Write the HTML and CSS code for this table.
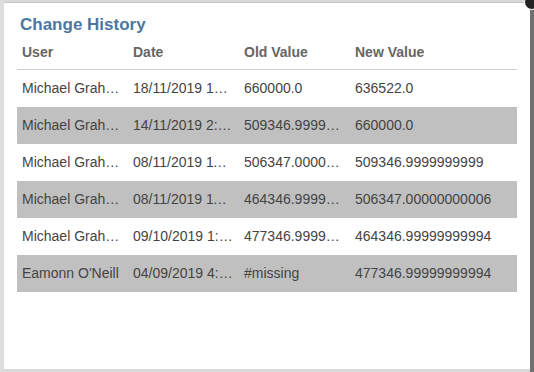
FILE: index.html
```html
<!DOCTYPE html>
<html>
<head>
<meta charset="utf-8">
<link rel="stylesheet" href="styles.css">
</head>
<body>
<div class="page">
  <div class="backdrop-left"></div>
  <div class="modal">
    <h2 class="title">Change History</h2>
    <table class="history">
      <colgroup>
        <col class="c-user"><col class="c-date"><col class="c-old"><col class="c-new">
      </colgroup>
      <thead>
        <tr><th>User</th><th>Date</th><th>Old Value</th><th>New Value</th></tr>
      </thead>
      <tbody>
        <tr><td>Michael Graham</td><td>18/11/2019 10:42:13</td><td>660000.0</td><td>636522.0</td></tr>
        <tr class="alt"><td>Michael Graham</td><td>14/11/2019 2:15:07 PM</td><td>509346.9999999999</td><td>660000.0</td></tr>
        <tr><td>Michael Graham</td><td>08/11/2019 11:20:41</td><td>506347.00000000006</td><td>509346.9999999999</td></tr>
        <tr class="alt"><td>Michael Graham</td><td>08/11/2019 11:18:02</td><td>464346.99999999994</td><td>506347.00000000006</td></tr>
        <tr><td>Michael Graham</td><td>09/10/2019 1:30:55 PM</td><td>477346.99999999994</td><td>464346.99999999994</td></tr>
        <tr class="alt"><td>Eamonn O'Neill</td><td>04/09/2019 4:10:22 PM</td><td>#missing</td><td>477346.99999999994</td></tr>
      </tbody>
    </table>
    <div class="close" aria-label="Close"></div>
  </div>
  <div class="backdrop-right"></div>
</div>
</body>
</html>
```
FILE: styles.css
```css
html, body {
  margin: 0;
  padding: 0;
  height: 100%;
}
body {
  background: #d9d9d9;
  font-family: "Liberation Sans", Arial, sans-serif;
  overflow: hidden;
}
.page {
  display: grid;
  grid-template-columns: 4px 526px 4px;
  height: 372px;
}
.backdrop-left {
  background: #dedede;
}
.backdrop-right {
  background: #707070;
}
.modal {
  position: relative;
  background: #fff;
  margin-top: 2px;
  height: 367px;
  border-top: 1px solid #c8c8c8;
  padding: 0 13px;
  box-sizing: border-box;
}
.title {
  margin: 0;
  padding-top: 12px;
  padding-left: 3px;
  font-size: 17px;
  line-height: 20px;
  font-weight: bold;
  color: #4a78a2;
}
.history {
  width: 500px;
  border-collapse: collapse;
  table-layout: fixed;
  font-size: 14px;
}
.c-user, .c-date, .c-old { width: 111px; }
.c-new { width: 167px; }
.history th {
  text-align: left;
  font-weight: bold;
  color: #666;
  padding: 7px 5px;
  line-height: 20px;
  border-bottom: 1px solid #cfcfcf;
}
.history td {
  color: #444;
  padding: 8px 5px;
  line-height: 21px;
  white-space: nowrap;
  overflow: hidden;
  text-overflow: ellipsis;
}
.history tr.alt td {
  background: #c0c0c0;
}
.close {
  position: absolute;
  top: -9px;
  right: -10px;
  width: 14px;
  height: 14px;
  border-radius: 50%;
  background: #222;
  border: 1px solid #fff;
}
```
